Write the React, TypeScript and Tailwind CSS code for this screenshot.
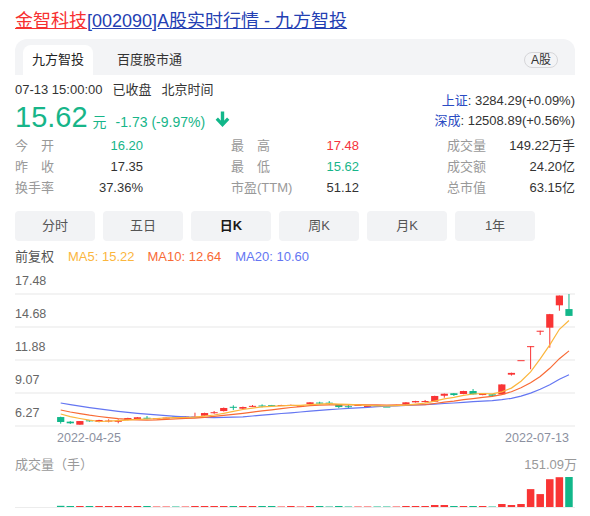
import React from 'react';

const FONT = { fontFamily: '"Liberation Sans", Arial, "Noto Sans CJK SC", sans-serif' };

const RED = '#f93434';
const GREEN = '#12b78a';

// 前19日收盘价，仅用于计算均线
const PRIOR = [9.3, 9.2, 9.1, 9.0, 8.9, 8.8, 8.6, 8.5, 8.4, 8.3, 8.2, 8.1, 8.0, 7.85, 7.7, 7.6, 7.5, 7.4, 7.34];

// [open, close, high, low]
const CANDLES: [number, number, number, number][] = [
  [7.03, 6.61, 7.06, 6.47],
  [6.64, 6.5, 6.69, 6.44],
  [6.38, 6.69, 6.69, 6.38],
  [6.75, 6.67, 6.78, 6.64],
  [6.61, 6.78, 6.8, 6.58],
  [6.7, 6.73, 6.84, 6.58],
  [6.68, 6.71, 6.84, 6.5],
  [6.78, 6.95, 6.97, 6.75],
  [6.84, 7.01, 7.03, 6.82],
  [6.97, 6.94, 7.12, 6.84],
  [6.92, 6.93, 6.95, 6.9],
  [6.97, 6.98, 7.0, 6.95],
  [7.07, 7.06, 7.08, 7.04],
  [7.06, 7.07, 7.09, 7.04],
  [7.05, 7.07, 7.4, 7.05],
  [7.14, 7.37, 7.4, 7.12],
  [7.42, 7.44, 7.54, 7.31],
  [7.54, 7.8, 7.84, 7.5],
  [7.9, 7.86, 8.03, 7.63],
  [7.74, 7.88, 7.92, 7.7],
  [7.96, 7.98, 8.05, 7.88],
  [8.01, 7.98, 8.11, 7.85],
  [8.04, 8.03, 8.06, 8.01],
  [8.04, 8.05, 8.07, 8.03],
  [8.05, 8.06, 8.09, 8.03],
  [7.99, 8.0, 8.02, 7.97],
  [8.14, 8.28, 8.3, 8.12],
  [8.26, 8.24, 8.33, 8.11],
  [8.25, 8.24, 8.39, 8.05],
  [8.11, 7.88, 8.14, 7.77],
  [7.95, 7.94, 8.11, 7.71],
  [8.05, 8.06, 8.08, 8.03],
  [7.96, 7.97, 7.99, 7.94],
  [8.03, 8.02, 8.05, 8.0],
  [7.92, 7.91, 7.93, 7.89],
  [8.04, 8.05, 8.07, 8.03],
  [8.11, 8.28, 8.3, 8.09],
  [8.28, 8.39, 8.41, 8.26],
  [8.37, 8.39, 8.48, 8.25],
  [8.33, 8.82, 8.84, 8.31],
  [8.84, 9.01, 9.03, 8.67],
  [9.05, 8.9, 9.07, 8.82],
  [8.99, 9.24, 9.26, 8.97],
  [9.24, 8.96, 9.41, 8.94],
  [8.9, 9.05, 9.07, 8.88],
  [8.96, 8.84, 8.98, 8.82],
  [8.96, 9.8, 9.82, 8.94],
  [10.63, 10.78, 10.8, 10.55],
  [11.86, 11.86, 11.86, 11.86],
  [13.05, 13.05, 13.05, 11.09],
  [14.36, 14.36, 14.36, 14.0],
  [14.62, 15.77, 15.79, 12.92],
  [16.52, 17.35, 17.35, 16.06],
  [16.2, 15.62, 17.48, 15.62],
];

// 成交量（万手）
const VOLUMES = [
  6, 5, 5, 5, 5, 5, 5, 5, 5, 5, 2.5, 2.5, 2.5, 2.5, 5, 5, 5, 5, 5, 5,
  5, 5, 5, 2.5, 5, 2.5, 5, 5, 2.5, 5, 2.5, 2.5, 2.5, 2.5, 2.5, 2.5, 5, 5, 5, 10,
  10, 5, 5, 5, 5, 2.5, 15, 10, 15, 90, 65, 140, 150, 151.09,
];

const AXIS = ['17.48', '14.68', '11.88', '9.07', '6.27'];

const priceY = (p: number) => 294 + (17.48 - p) * (132 / 11.21);
const candleX = (i: number) => 60.7 + i * 9.59;

const movingAverage = (n: number) => {
  const closes = [...PRIOR, ...CANDLES.map(c => c[1])];
  return CANDLES.map((_, i) => {
    const end = i + PRIOR.length;
    let sum = 0;
    for (let k = end - n + 1; k <= end; k++) sum += closes[k];
    return `${candleX(i).toFixed(1)},${priceY(sum / n).toFixed(1)}`;
  }).join(' ');
};

const StatCell: React.FC<{ label: string; value: string; color?: string }> = ({ label, value, color = 'text-[#333]' }) => (
  <div className="flex h-[21px] items-center justify-between">
    <span className="text-[#999]">{label}</span>
    <span className={color}>{value}</span>
  </div>
);

const DownArrow = () => (
  <svg width="15" height="16" viewBox="0 0 15 16" className="ml-[10px] self-center mt-[4px]">
    <path d="M7.5 0.5v13" stroke={GREEN} strokeWidth="3.4" fill="none" />
    <path d="M1.8 7.6l5.7 6 5.7-6" stroke={GREEN} strokeWidth="3.2" fill="none" strokeLinejoin="miter" />
  </svg>
);

const KChart = () => (
  <svg className="absolute inset-0 h-full w-full" viewBox="15 270 560 157" preserveAspectRatio="none">
    {CANDLES.map(([o, c, h, l], i) => {
      const cx = candleX(i);
      const color = c >= o ? RED : GREEN;
      const top = priceY(Math.max(o, c));
      const bodyH = Math.max(Math.abs(priceY(o) - priceY(c)), 1);
      return (
        <g key={i}>
          <line x1={cx} x2={cx} y1={priceY(h)} y2={priceY(l)} stroke={color} strokeWidth="1" />
          <rect x={cx - 3.6} y={top} width="7.2" height={bodyH} fill={color} />
        </g>
      );
    })}
    <polyline points={movingAverage(20)} fill="none" stroke="#6476f2" strokeWidth="1.2" />
    <polyline points={movingAverage(10)} fill="none" stroke="#f86a35" strokeWidth="1.2" />
    <polyline points={movingAverage(5)} fill="none" stroke="#fbb63d" strokeWidth="1.2" />
  </svg>
);

const VolumeChart = () => (
  <svg className="absolute inset-0 h-full w-full" viewBox="15 474 560 33" preserveAspectRatio="none">
    {VOLUMES.map((v, i) => {
      const [o, c] = CANDLES[i];
      const h = (v / 151.09) * 30;
      return (
        <rect key={i} x={candleX(i) - 3.75} y={507 - h} width="7.5" height={h} fill={c >= o ? RED : GREEN} />
      );
    })}
  </svg>
);

export default function App() {
  const periods = ['分时', '五日', '日K', '周K', '月K', '1年'];

  return (
    <div className="h-[516px] w-[590px] overflow-hidden bg-white px-[15px] text-[13px] text-[#333]" style={FONT}>
      <div className="pt-[9px] text-[18px] leading-[24px]">
        <a className="text-[#f73131] underline">金智科技</a>
        <a className="text-[#2440b3] underline">[002090]A股实时行情 - 九方智投</a>
      </div>

      <div className="mt-[6px] flex h-[36px] items-end justify-between rounded-t-[12px] bg-[#f3f4f6] pl-[8px] pr-[17px]">
        <div className="flex items-end gap-[15px]">
          <div className="flex h-[30px] items-center rounded-t-[8px] bg-white px-[9px] text-[#222]">九方智投</div>
          <div className="flex h-[30px] items-center px-[9px] text-[#333]">百度股市通</div>
        </div>
        <div className="mb-[7px] flex h-[16px] items-center rounded-full border border-[#d6d6d9] px-[6px] text-[12px] leading-none text-[#333]">
          A股
        </div>
      </div>

      <div className="flex justify-between pt-[6px]">
        <div>
          <div className="h-[18px] leading-[18px]">
            07-13 15:00:00<span className="ml-[10px]">已收盘</span><span className="ml-[10px]">北京时间</span>
          </div>
          <div className="flex h-[36px] items-baseline text-[#17b589]">
            <span className="text-[29px] leading-[36px]">15.62</span>
            <span className="ml-[5px] text-[14px]">元</span>
            <span className="ml-[9px] text-[14px]">-1.73 (-9.97%)</span>
            <DownArrow />
          </div>
        </div>
        <div className="pt-[10px] text-right leading-[20px]">
          <div><span className="text-[#2a4bc3]">上证</span>: 3284.29(+0.09%)</div>
          <div><span className="text-[#2a4bc3]">深成</span>: 12508.89(+0.56%)</div>
        </div>
      </div>

      <div className="grid grid-cols-[128px_128px_128px] gap-x-[88px]">
        <StatCell label="今　开" value="16.20" color="text-[#17b589]" />
        <StatCell label="最　高" value="17.48" color="text-[#f5333d]" />
        <StatCell label="成交量" value="149.22万手" />
        <StatCell label="昨　收" value="17.35" />
        <StatCell label="最　低" value="15.62" color="text-[#17b589]" />
        <StatCell label="成交额" value="24.20亿" />
        <StatCell label="换手率" value="37.36%" />
        <StatCell label="市盈(TTM)" value="51.12" />
        <StatCell label="总市值" value="63.15亿" />
      </div>

      <div className="mt-[12.5px] flex gap-[8px]">
        {periods.map(p => (
          <div
            key={p}
            className={`flex h-[30px] w-[80px] items-center justify-center rounded-[4px] bg-[#f2f3f5] ${p === '日K' ? 'font-bold text-[#1a1a1a]' : 'text-[#555]'}`}
          >
            {p}
          </div>
        ))}
      </div>

      <div className="mt-[7px] flex h-[18px] items-center leading-[18px]">
        <span className="text-[#555]">前复权</span>
        <span className="ml-[14px] text-[#fbb63d]">MA5: 15.22</span>
        <span className="ml-[13px] text-[#f86a35]">MA10: 12.64</span>
        <span className="ml-[14px] text-[#6476f2]">MA20: 10.60</span>
      </div>

      <div className="relative mt-[4px] text-[12.5px] leading-[18px] text-[#666]">
        {AXIS.map((v, i) => (
          <div key={v} className={`flex items-end border-b-2 border-[#f3f3f3] pb-[3px] ${i === 0 ? 'h-[25px]' : 'h-[33px]'}`}>
            {v}
          </div>
        ))}
        <KChart />
      </div>

      <div className="mt-[2px] flex justify-between pl-[42px] pr-[6px] text-[12.5px] leading-[18px] text-[#8c90a0]">
        <span>2022-04-25</span>
        <span>2022-07-13</span>
      </div>

      <div className="mt-[9px] flex justify-between pr-[-2px] leading-[18px] text-[#999]">
        <span>成交量（手）</span>
        <span className="mr-[-2px]">151.09万</span>
      </div>

      <div className="relative h-[34px] border-b border-[#ececec]">
        <VolumeChart />
      </div>
    </div>
  );
}
